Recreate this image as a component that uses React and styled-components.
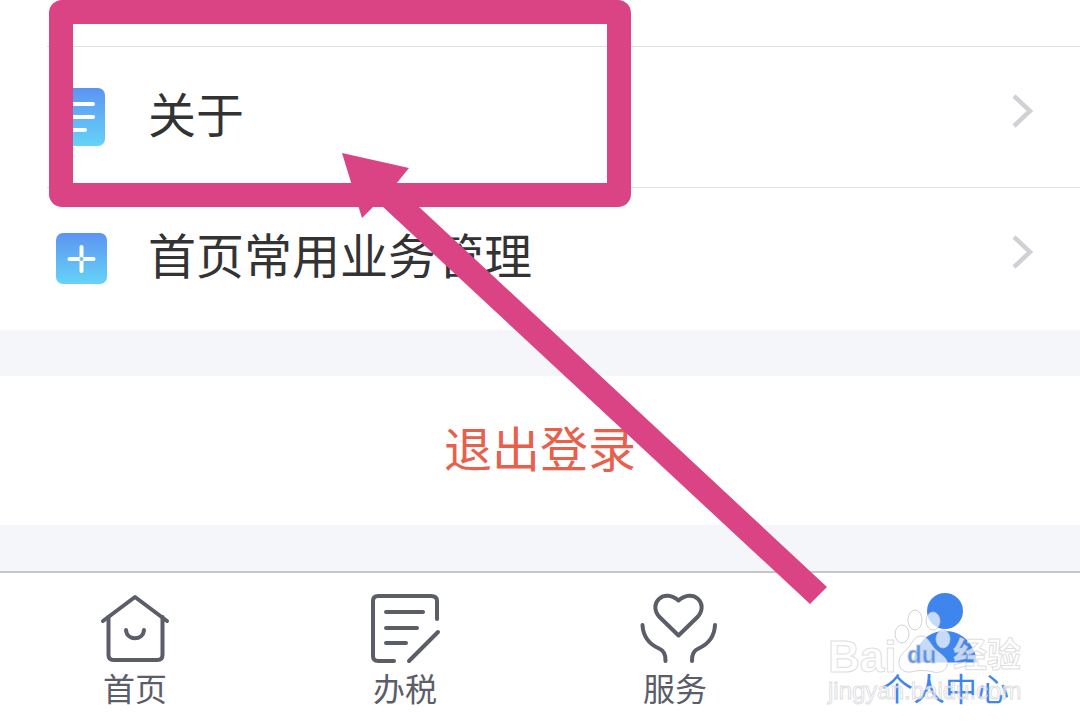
import React from 'react';
import styled, { createGlobalStyle } from 'styled-components';

const GlobalStyle = createGlobalStyle`
  * {
    box-sizing: border-box;
  }

  body {
    margin: 0;
    background: #fff;
    font-family: 'Noto Sans CJK SC', 'Noto Sans', sans-serif;
  }
`;

const Page = styled.div`
  position: relative;
  min-height: 100vh;
  overflow: hidden;
  background: #f4f6fa;
  display: flex;
  flex-direction: column;
`;

const Menu = styled.ul`
  list-style: none;
  margin: 0;
  padding: 46px 0 2px 47px;
  background: #fff;
`;

const MenuItem = styled.li`
  border-top: 1px solid #dfe0e2;
`;

const MenuLink = styled.a`
  display: flex;
  align-items: center;
  height: 140px;
  padding: 0 46px 0 8px;
  color: #333;
  font-size: 48px;
  line-height: 72px;
  text-decoration: none;
`;

const MenuIcon = styled.svg`
  width: 52px;
  height: 60px;
  margin-right: 41px;
`;

const MenuText = styled.span`
  flex: 1;
  padding-bottom: 10px;
`;

const Chevron = styled.svg`
  width: 22px;
  height: 34px;
  margin-bottom: 12px;
`;

const Logout = styled.button`
  height: 149px;
  margin: 46px 0;
  padding: 0 0 10px;
  border: 0;
  background: #fff;
  color: #e8604c;
  font-family: inherit;
  font-size: 48px;
  line-height: 72px;
  cursor: pointer;
`;

const TabBar = styled.nav`
  display: flex;
  flex: 1;
  border-top: 2px solid #c3c6cc;
  background: #fff;
`;

const Tab = styled.a`
  flex: 1;
  display: flex;
  flex-direction: column;
  align-items: center;
  padding-top: 19px;
  color: ${(props) => (props.$active ? '#3f85ee' : '#5b5d68')};
  font-size: 32px;
  line-height: 46px;
  text-decoration: none;
`;

const TabIcon = styled.svg`
  width: 80px;
  height: 72px;
  overflow: visible;
  fill: none;
  stroke: currentColor;
  stroke-width: 4;
  stroke-linecap: round;
  stroke-linejoin: round;
`;

const Annotation = styled.svg`
  position: absolute;
  top: 0;
  left: 0;
  width: 840px;
  height: 610px;
  pointer-events: none;
`;

const Watermark = styled.div`
  position: absolute;
  right: 59px;
  bottom: 20px;
  width: 193px;
  color: rgba(255, 255, 255, 0.7);
  font-family: 'Liberation Sans', 'Noto Sans CJK SC', sans-serif;
  -webkit-text-stroke: 1px rgba(200, 200, 204, 0.6);
  pointer-events: none;
`;

const WatermarkBrand = styled.div`
  display: flex;
  align-items: flex-end;
  justify-content: space-between;
  height: 66px;
  font-size: 44px;
  font-weight: 700;
  line-height: 38px;
`;

const WatermarkName = styled.span`
  font-size: 34px;
  line-height: 42px;
`;

const WatermarkLogo = styled.svg`
  width: 60px;
  height: 66px;
  margin: 0 -8px;
  overflow: visible;
  fill: rgba(255, 255, 255, 0.7);
  stroke: rgba(200, 200, 204, 0.8);
`;

const WatermarkSite = styled.div`
  font-size: 24px;
  line-height: 30px;
`;

const AboutIcon = () => (
  <MenuIcon viewBox="0 0 52 60" aria-hidden="true">
    <defs>
      <linearGradient id="about" x2="0" y2="1">
        <stop offset="0" stopColor="#5d94f2" />
        <stop offset="1" stopColor="#65d3f8" />
      </linearGradient>
    </defs>
    <rect x="2" y="1" width="48" height="58" rx="7" fill="url(#about)" />
    <path d="M12 17h26M12 30h26M12 43h18" stroke="#fff" strokeWidth="4" strokeLinecap="round" />
  </MenuIcon>
);

const ManageIcon = () => (
  <MenuIcon viewBox="0 0 52 60" aria-hidden="true">
    <defs>
      <linearGradient id="manage" x2="0" y2="1">
        <stop offset="0" stopColor="#5d94f2" />
        <stop offset="1" stopColor="#65d3f8" />
      </linearGradient>
    </defs>
    <rect x="1" y="5" width="51" height="51" rx="7" fill="url(#manage)" />
    <path d="M14.500 31h24M26.500 19v24" stroke="#fff" strokeWidth="4" strokeLinecap="round" />
    <circle cx="26.500" cy="31" r="2" fill="#7cbcf7" />
  </MenuIcon>
);

const ArrowRight = () => (
  <Chevron viewBox="0 0 22 34" fill="none" stroke="#d0d1d5" strokeWidth="4.500" aria-hidden="true">
    <path d="M2 2l16 15L2 32" />
  </Chevron>
);

const HomeIcon = () => (
  <TabIcon viewBox="0 0 80 72" aria-hidden="true">
    <path d="M8 29L40 5l32 24" />
    <path d="M13.500 25v38q0 5 5 5h44q5 0 5-5V25" />
    <path d="M31 38c1 11 17 11 18 0" />
  </TabIcon>
);

const TaxIcon = () => (
  <TabIcon viewBox="0 0 80 72" aria-hidden="true">
    <path d="M29 69H13q-5 0-5-5V9q0-5 5-5h53q6 0 6 5v18" />
    <path d="M21 20h37M21 36h31M21 51h20M44 69l29-29" />
  </TabIcon>
);

const ServiceIcon = () => (
  <TabIcon viewBox="0 0 80 72" aria-hidden="true">
    <path d="M43.500 43.500L24 24.500C13 11 29-4 43.500 8.500 58-4 74 11 63 24.500z" />
    <path d="M7.500 33C8 44 14 52 24 56.500q7 3 6.500 12.500M80 33C79.500 44 73.500 52 63.500 56.500q-7 3-6.500 12.500" />
  </TabIcon>
);

const UserIcon = () => (
  <TabIcon viewBox="0 0 80 72" aria-hidden="true">
    <g fill="currentColor" stroke="none">
      <circle cx="40" cy="19" r="18" />
      <path d="M8 70.500C10 52 23 39 40 39s30 13 32 31.500z" />
    </g>
  </TabIcon>
);

const menu = [
  { text: '关于', Icon: AboutIcon },
  { text: '首页常用业务管理', Icon: ManageIcon },
];

const tabs = [
  { text: '首页', Icon: HomeIcon },
  { text: '办税', Icon: TaxIcon },
  { text: '服务', Icon: ServiceIcon },
  { text: '个人中心', Icon: UserIcon, active: true },
];

const App = () => {
  return (
    <>
      <GlobalStyle />
      <Page>
        <Menu>
          {menu.map(({ text, Icon }) => (
            <MenuItem key={text}>
              <MenuLink href="#">
                <Icon />
                <MenuText>{text}</MenuText>
                <ArrowRight />
              </MenuLink>
            </MenuItem>
          ))}
        </Menu>
        <Logout type="button">退出登录</Logout>
        <TabBar>
          {tabs.map(({ text, Icon, active }) => (
            <Tab key={text} href="#" $active={active}>
              <Icon />
              {text}
            </Tab>
          ))}
        </TabBar>
        <Annotation viewBox="0 0 840 610" fill="#da4484" aria-hidden="true">
          <rect x="61" y="12" width="558" height="183" rx="1" fill="none" stroke="#da4484" strokeWidth="24" strokeLinejoin="round" />
          <path d="M342 153l67 15-13 16 22 22 409 381-17 17L382 206l-9 1-11 11z" />
        </Annotation>
        <Watermark>
          <WatermarkBrand>
            <span>Bai</span>
            <WatermarkLogo viewBox="0 0 60 66">
              <ellipse cx="7" cy="24" rx="7" ry="9" />
              <ellipse cx="20" cy="10" rx="7" ry="10" />
              <ellipse cx="38" cy="11" rx="7" ry="9" />
              <ellipse cx="48" cy="29" rx="7" ry="9" />
              <path d="M26 26c7 0 9 8 14 13 8 7 14 10 12 17-2 6-8 7-14 6-7-2-15-2-22 0C9 63 4 59 4 52c0-6 4-9 8-13 5-5 7-13 14-13z" />
              <text x="12" y="53" fontSize="24" fill="#3f85ee" fillOpacity="0.85">du</text>
            </WatermarkLogo>
            <WatermarkName>经验</WatermarkName>
          </WatermarkBrand>
          <WatermarkSite>jingyan.baidu.com</WatermarkSite>
        </Watermark>
      </Page>
    </>
  );
};

export default App;
